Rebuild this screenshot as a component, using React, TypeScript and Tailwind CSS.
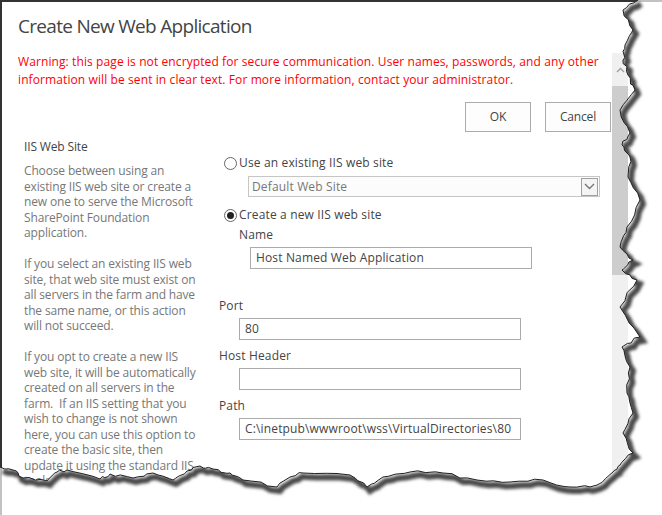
import type { ReactNode } from 'react'

// torn paper edge, right side down then bottom right to left
const rough: [number, number][] = [
  [638, 0], [623, 10], [633, 30], [625, 45], [623, 60], [628, 75], [635, 90], [620, 110], [630, 133], [622, 145],
  [630, 157], [628, 177], [640, 200], [627, 227], [620, 247], [633, 260], [622, 270], [637, 280], [620, 307],
  [640, 337], [622, 347], [630, 367], [627, 393], [633, 413], [623, 433], [633, 453], [620, 465], [613, 472],
  [597, 485], [570, 487], [543, 480], [510, 482], [477, 480], [443, 473], [410, 472], [383, 477], [367, 487],
  [350, 475], [303, 473], [290, 477], [277, 487], [243, 480], [230, 473], [213, 469], [200, 466], [187, 471],
  [173, 480], [153, 473], [133, 478], [110, 474], [100, 479], [67, 470], [57, 472], [47, 481], [23, 478],
  [13, 470], [0, 467],
]

let seed = 7
const rnd = () => {
  seed = (seed * 9301 + 49297) % 233280
  return seed / 233280 - 0.5
}

const edge: [number, number][] = []
rough.forEach((p, i) => {
  edge.push(p)
  const n = rough[i + 1]
  if (!n) return
  for (let k = 1; k < 4; k++) {
    const t = k / 4
    edge.push([p[0] + (n[0] - p[0]) * t + rnd() * 3, p[1] + (n[1] - p[1]) * t + rnd() * 3])
  }
})

const edgePts = edge.map(([x, y]) => `${x.toFixed(1)},${y.toFixed(1)}`).join(' ')
const outside = `${edgePts} 0,515 662,515 662,0`

function TornEdge() {
  return (
    <svg className="absolute inset-0 pointer-events-none" width={662} height={515} viewBox="0 0 662 515">
      <defs>
        <clipPath id="out">
          <polygon points={outside} />
        </clipPath>
        <filter id="blur" x="-10%" y="-10%" width="120%" height="120%">
          <feGaussianBlur stdDeviation="1.6" />
        </filter>
      </defs>
      <polygon points={outside} fill="#fff" fillOpacity={0.7} />
      <g clipPath="url(#out)">
        <polyline points={edgePts} fill="none" stroke="#4a4a4a" strokeWidth={6} transform="translate(3 4)" filter="url(#blur)" />
      </g>
      <polyline points={edgePts} fill="none" stroke="#1e1e1e" strokeWidth={1} />
    </svg>
  )
}

function Radio({ checked, children }: { checked?: boolean; children: ReactNode }) {
  return (
    <div className="flex items-center h-[18px]">
      <span className="ml-[5px] w-[13px] h-[13px] rounded-full border border-[#666] bg-white flex items-center justify-center">
        {checked && <span className="w-[7px] h-[7px] rounded-full bg-[#222]" />}
      </span>
      <span className="ml-[2px] text-[#444]">{children}</span>
    </div>
  )
}

function Field({ value, className }: { value: string; className: string }) {
  return (
    <div className={`h-[22px] w-[282px] border border-[#ababab] bg-white px-[5px] flex items-center text-[#444] whitespace-nowrap overflow-hidden ${className}`}>
      {value}
    </div>
  )
}

export default function App() {
  return (
    <div className="relative w-[662px] h-[515px] bg-white overflow-hidden font-['Open_Sans',sans-serif] text-[12px] tracking-[-0.15px]">
      <div className="flex h-full border-l-2 border-t-2 border-[#333]">
        <div className="w-[609px] shrink-0">
          <h1 className="pl-4 pt-[10px] text-[19px] leading-[28px] tracking-[-0.7px] text-[#444]">Create New Web Application</h1>
          <p className="pl-4 mt-[13px] text-[#f00] leading-[18px] tracking-[0.1px] whitespace-nowrap">
            Warning: this page is not encrypted for secure communication. User names, passwords, and any other<br />
            information will be sent in clear text. For more information, contact your administrator.
          </p>
          <div className="flex justify-end gap-[14px] mt-[13px]">
            <button className="w-[66px] h-[30px] border border-[#ababab] bg-[#fdfdfd] text-[#444]">OK</button>
            <button className="w-[66px] h-[30px] border border-[#ababab] bg-[#fdfdfd] text-[#444]">Cancel</button>
          </div>

          <div className="flex mt-[6px]">
            <div className="w-[217px] pl-[22px] shrink-0 whitespace-nowrap">
              <h2 className="leading-[18px] text-[#444]">IIS Web Site</h2>
              <div className="mt-[7px] leading-[15.5px] text-[#777]">
                <p>
                  Choose between using an<br />existing IIS web site or create a<br />new one to serve the Microsoft<br />
                  SharePoint Foundation<br />application.
                </p>
                <p className="mt-[15.5px]">
                  If you select an existing IIS web<br />site, that web site must exist on<br />all servers in the farm and have<br />
                  the same name, or this action<br />will not succeed.
                </p>
                <p className="mt-[15.5px]">
                  If you opt to create a new IIS<br />web site, it will be automatically<br />created on all servers in the<br />
                  farm.&nbsp; If an IIS setting that you<br />wish to change is not shown<br />here, you can use this option to<br />
                  create the basic site, then<br />update it using the standard IIS<br />tools.
                </p>
              </div>
            </div>

            <div className="flex-1 pt-[16px] tracking-[0.15px]">
              <Radio>Use an existing IIS web site</Radio>
              <div className="ml-[29px] mt-[4px] w-[352px] h-[21px] border border-[#c6c6c6] bg-[#fcfcfc] flex items-center justify-between pl-[3px] pr-[1px]">
                <span className="text-[#777]">Default Web Site</span>
                <span className="w-[17px] h-[18px] border border-[#a0a0a0] bg-[#f4f4f4] flex items-center justify-center">
                  <svg width="11" height="7" viewBox="0 0 11 7">
                    <path d="M1 1 L5.5 5.5 L10 1" fill="none" stroke="#777" strokeWidth="1.4" />
                  </svg>
                </span>
              </div>
              <div className="mt-[9px]">
                <Radio checked>Create a new IIS web site</Radio>
              </div>
              <div className="ml-[20px] mt-[2px] leading-[18px] text-[#444]">Name</div>
              <Field value="Host Named Web Application" className="ml-[31px] mt-[3px]" />

              <div className="mt-[28px] leading-[18px] text-[#444]">Port</div>
              <Field value="80" className="ml-[20px] mt-[3px]" />
              <div className="mt-[7px] leading-[18px] text-[#444]">Host Header</div>
              <Field value="" className="ml-[20px] mt-[3px]" />
              <div className="mt-[7px] leading-[18px] text-[#444]">Path</div>
              <Field value="C:\inetpub\wwwroot\wss\VirtualDirectories\80" className="ml-[20px] mt-[3px]" />
            </div>
          </div>
        </div>

        <div className="w-[16px] ml-[1px] mt-[51px] mb-[38px] bg-[#f0f0f0] flex flex-col">
          <div className="h-[33px] flex items-center justify-center">
            <svg width="9" height="6" viewBox="0 0 9 6">
              <path d="M1 5 L4.5 1.5 L8 5" fill="none" stroke="#a0a0a0" strokeWidth="1.4" />
            </svg>
          </div>
          <div className="h-[189px] bg-[#cdcdcd]" />
        </div>
      </div>
      <TornEdge />
    </div>
  )
}
